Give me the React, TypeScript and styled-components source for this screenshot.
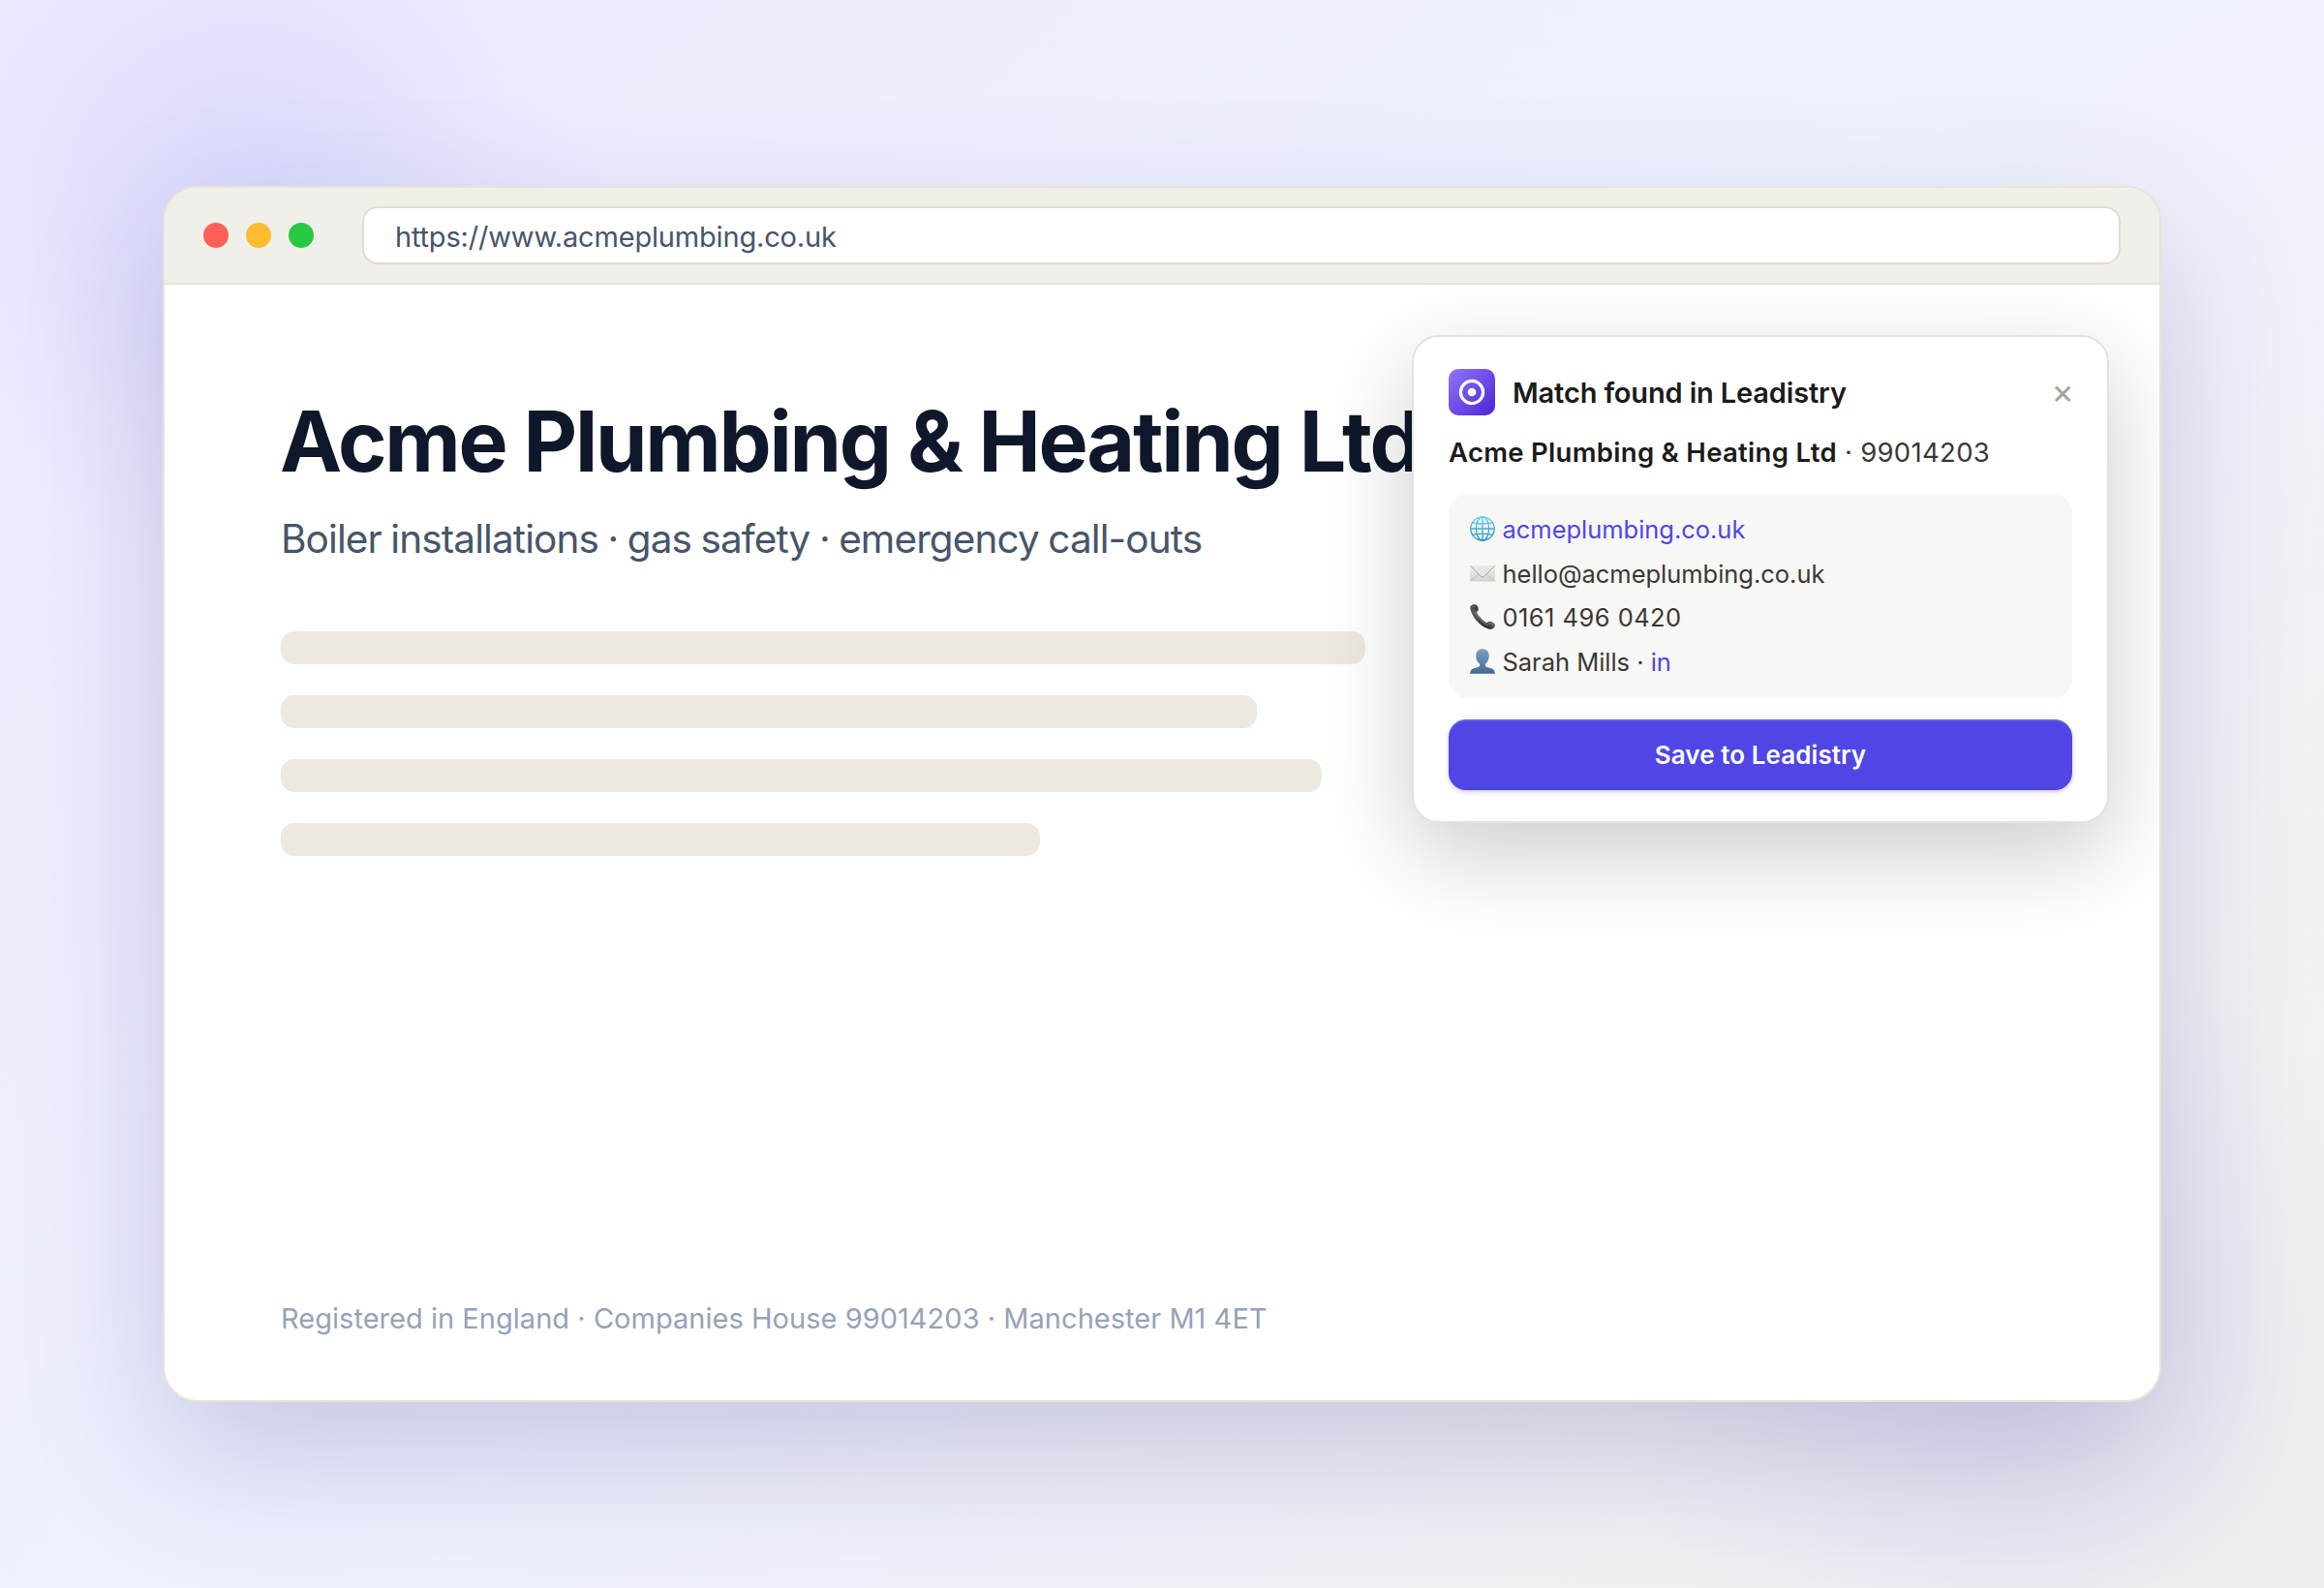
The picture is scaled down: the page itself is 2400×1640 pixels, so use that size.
import React from "react";
import styled, { createGlobalStyle } from "styled-components";

const GlobalStyle = createGlobalStyle`
  *, *::before, *::after { box-sizing: border-box; }
  body {
    margin: 0;
    font-family: Inter, "Liberation Sans", sans-serif;
    -webkit-font-smoothing: antialiased;
  }
`;

const Stage = styled.main`
  display: flex;
  align-items: center;
  justify-content: center;
  width: 2400px;
  height: 1640px;
  overflow: hidden;
  background:
    radial-gradient(circle at 260px 220px, rgba(129, 140, 248, 0.18) 0, rgba(129, 140, 248, 0.12) 130px, rgba(129, 140, 248, 0.04) 260px, transparent 370px),
    radial-gradient(circle at 2090px 1400px, rgba(139, 92, 246, 0.11) 0, rgba(139, 92, 246, 0.08) 150px, rgba(139, 92, 246, 0.035) 300px, transparent 430px),
    linear-gradient(135deg, #ede9fe 0%, #eef2ff 48%, #f3f1ee 100%);
`;

const BrowserWindow = styled.section`
  display: flex;
  flex-direction: column;
  width: 2064px;
  height: 1256px;
  overflow: hidden;
  border: 2px solid #e7e3d8;
  border-radius: 36px;
  background: #ffffff;
  box-shadow: 0 56px 150px rgba(38, 30, 120, 0.2);
`;

const TitleBar = styled.header`
  display: flex;
  align-items: center;
  gap: 50px;
  height: 100px;
  flex: none;
  padding: 0 40px;
  border-bottom: 2px solid #e7e3d8;
  background: #f0efea;
`;

const Lights = styled.div`
  display: flex;
  gap: 18px;
`;

const Light = styled.span<{ $color: string }>`
  width: 26px;
  height: 26px;
  border-radius: 50%;
  background: ${(p) => p.$color};
`;

const AddressBar = styled.div`
  flex: 1;
  height: 60px;
  padding: 1px 32px 0;
  border: 2px solid #e0ddd0;
  border-radius: 16px;
  background: #ffffff;
  color: #475569;
  font-size: 29px;
  line-height: 57px;
  letter-spacing: -0.18px;
`;

const Page = styled.div`
  position: relative;
  display: flex;
  flex: 1;
  flex-direction: column;
  padding: 114px 120px 66px;
`;

const Heading = styled.h1`
  margin: 0 0 0 -1px;
  color: #0f172a;
  font-size: 86px;
  font-weight: 700;
  line-height: 96px;
  letter-spacing: -2.27px;
  white-space: nowrap;
`;

const Tagline = styled.p`
  margin: 27px 0 0;
  color: #475569;
  font-size: 40.5px;
  line-height: 52px;
  letter-spacing: -0.9px;
  word-spacing: -1px;
`;

const Skeleton = styled.div`
  display: flex;
  flex-direction: column;
  gap: 32px;
  width: 1120px;
  margin-top: 69px;
`;

const SkeletonLine = styled.div<{ $width: number }>`
  width: ${(p) => p.$width}%;
  height: 34px;
  border-radius: 14px;
  background: #ede9de;
`;

const Registration = styled.p`
  margin: auto 0 0;
  color: #94a3b8;
  font-size: 29px;
  line-height: 36px;
  letter-spacing: 0.03px;
`;

const Popup = styled.aside`
  position: absolute;
  top: 52px;
  right: 52px;
  width: 720px;
  height: 504px;
  padding: 33px 36px 0;
  border: 2px solid #e3e3dd;
  border-radius: 28px;
  background: #ffffff;
  box-shadow: 0 32px 96px rgba(0, 0, 0, 0.2);
`;

const PopupHead = styled.div`
  display: flex;
  align-items: center;
  height: 48px;
`;

const Logo = styled.svg`
  width: 48px;
  height: 48px;
  margin-right: 18px;
`;

const PopupTitle = styled.h2`
  margin: 1px 0 0;
  flex: 1;
  color: #1c1b1a;
  font-size: 29px;
  font-weight: 600;
  line-height: 36px;
  letter-spacing: -0.15px;
`;

const CloseButton = styled.button`
  margin: -2px -2px 0 0;
  padding: 0;
  border: 0;
  background: none;
  color: #a8a29a;
  font: 400 36px/48px Inter, sans-serif;
`;

const Company = styled.p`
  margin: 17px 0 0;
  color: #3b3833;
  font-size: 27.5px;
  line-height: 42px;
  letter-spacing: 0.3px;
`;

const CompanyName = styled.strong`
  color: #1c1b1a;
  font-weight: 600;
`;

const Contacts = styled.ul`
  margin: 22px 0 0;
  padding: 14px 22px 15px;
  border-radius: 20px;
  background: #f7f7f5;
  list-style: none;
`;

const Contact = styled.li<{ $tracking?: number }>`
  display: flex;
  align-items: center;
  gap: 7.5px;
  height: 45.5px;
  color: #3b3833;
  font-size: 25.5px;
  line-height: 45.5px;
  letter-spacing: ${(p) => p.$tracking ?? -0.03}px;
`;

const Glyph = styled.svg`
  flex: none;
  width: 26px;
  height: 26px;
  margin-top: -1.5px;
`;

const Link = styled.a`
  color: #4f46e5;
  text-decoration: none;
`;

const SaveButton = styled.button`
  display: block;
  width: 100%;
  height: 73px;
  margin-top: 22px;
  padding: 0;
  border: 0;
  border-radius: 18px;
  background: #4f46e5;
  box-shadow: inset 0 2px 0 rgba(255, 255, 255, 0.14), 0 2px 5px rgba(79, 70, 229, 0.28);
  color: #ffffff;
  font: 600 26px/73px Inter, sans-serif;
  letter-spacing: 0.07px;
`;

const LogoMark = () => (
  <Logo viewBox="0 0 48 48" aria-hidden="true">
    <defs>
      <linearGradient id="logo" x1="0" y1="0" x2="1" y2="1">
        <stop offset="0" stopColor="#9275fd" />
        <stop offset="1" stopColor="#4c25d3" />
      </linearGradient>
    </defs>
    <rect width="48" height="48" rx="10" fill="url(#logo)" />
    <circle cx="24" cy="24" r="11.6" fill="none" stroke="#fff" strokeWidth="3.2" />
    <circle cx="24" cy="24" r="4.3" fill="#fff" />
  </Logo>
);

const GlobeGlyph = () => (
  <Glyph viewBox="0 0 26 26" aria-hidden="true">
    <defs>
      <linearGradient id="globe" x1="0" y1="0" x2="0" y2="1">
        <stop offset="0" stopColor="#6cc9e8" />
        <stop offset="1" stopColor="#2c8fb4" />
      </linearGradient>
    </defs>
    <circle cx="13" cy="13" r="12.5" fill="#e3f6fc" />
    <g fill="none" stroke="url(#globe)" strokeWidth="1.3">
      <circle cx="13" cy="13" r="12.2" />
      <ellipse cx="13" cy="13" rx="6.6" ry="12.2" />
      <path d="M13 .8 13.01 25.2M.8 13 25.2 13.01M2.8 6.7Q13 9.2 23.2 6.7M2.8 19.3Q13 16.8 23.2 19.3" />
    </g>
  </Glyph>
);

const EnvelopeGlyph = () => (
  <Glyph viewBox="0 0 26 26" aria-hidden="true">
    <defs>
      <linearGradient id="mail" x1="0" y1="0" x2="0" y2="1">
        <stop offset="0" stopColor="#f0f0f0" />
        <stop offset="1" stopColor="#d2d2d2" />
      </linearGradient>
    </defs>
    <rect x="0.2" y="5" width="25.6" height="16.6" rx="0.8" fill="url(#mail)" />
    <path d="M.6 21.2 9.8 13.4M25.4 21.2 16.2 13.4" stroke="#bcbcbc" strokeWidth="0.8" fill="none" />
    <path d="M.5 5.5 11.2 16.2Q13 17.8 14.8 16.2L25.5 5.5" stroke="#a9a9a9" strokeWidth="1" fill="#e6e6e6" />
  </Glyph>
);

const PhoneGlyph = () => (
  <Glyph viewBox="0 0 26 26" aria-hidden="true">
    <defs>
      <linearGradient id="phone" x1="0.6" y1="0.2" x2="0.3" y2="0.8">
        <stop offset="0" stopColor="#2b2f31" />
        <stop offset="0.5" stopColor="#5e6466" />
        <stop offset="1" stopColor="#26292b" />
      </linearGradient>
    </defs>
    <path
      d="M.3 3.6C.2 1.7 2.2.2 4.4.2 6.3.2 7.9 1.5 8.5 3.6 9 5.5 8.7 7 7.3 7.7 6.9 8 6.9 8.5 7.2 9.1 9.3 12.8 12.7 16.3 16.5 18.8 17.1 19.2 17.6 19.1 18 18.7 19 17.5 20.8 17.5 22.6 18.2 24.7 19 26 20.6 25.8 22.3 25.6 24.4 23.6 25.9 21.3 25.9 17.8 25.8 12.4 22.8 8.3 18.6 3.8 14 .6 8.1.3 3.6Z"
      fill="url(#phone)"
    />
    <path d="M4.8 7.5C7.5 13.2 12.3 18.3 18.3 21.6" stroke="#858c8e" strokeWidth="1" fill="none" opacity="0.7" />
    <path d="M2 3.2Q4 1.3 6.3 2.6M19.4 20Q22.3 19.5 24.3 21.8" stroke="#7c8284" strokeWidth="0.9" fill="none" />
  </Glyph>
);

const PersonGlyph = () => (
  <Glyph viewBox="0 0 26 26" aria-hidden="true">
    <defs>
      <linearGradient id="person" gradientUnits="userSpaceOnUse" x1="13" y1="0" x2="13" y2="26">
        <stop offset="0" stopColor="#79a3c6" />
        <stop offset="1" stopColor="#42698f" />
      </linearGradient>
    </defs>
    <path
      d="M13 .3C16.9.3 19.8 2.9 19.8 7.2 19.8 10.3 18.6 13.6 16.3 15.3 15.9 15.7 15.8 16.2 15.8 17 15.9 18.4 17 19 19.2 19.5 23.2 20.4 25.8 21.5 25.9 25.8L.1 25.8C.2 21.5 2.8 20.4 6.8 19.5 9 19 10.1 18.4 10.2 17 10.2 16.2 10.1 15.7 9.7 15.3 7.4 13.6 6.2 10.3 6.2 7.2 6.2 2.9 9.1.3 13 .3Z"
      fill="url(#person)"
    />
  </Glyph>
);

const skeletonWidths = [100, 90, 96, 70];

export default function App() {
  return (
    <>
      <GlobalStyle />
      <Stage>
        <BrowserWindow>
          <TitleBar>
            <Lights>
              <Light $color="#ff5f57" />
              <Light $color="#febc2e" />
              <Light $color="#28c840" />
            </Lights>
            <AddressBar>https://www.acmeplumbing.co.uk</AddressBar>
          </TitleBar>
          <Page>
            <Heading>Acme Plumbing &amp; Heating Ltd</Heading>
            <Tagline>Boiler installations · gas safety · emergency call-outs</Tagline>
            <Skeleton>
              {skeletonWidths.map((width) => (
                <SkeletonLine key={width} $width={width} />
              ))}
            </Skeleton>
            <Registration>
              Registered in England · Companies House 99014203 · Manchester M1 4ET
            </Registration>
            <Popup>
              <PopupHead>
                <LogoMark />
                <PopupTitle>Match found in Leadistry</PopupTitle>
                <CloseButton aria-label="Close">×</CloseButton>
              </PopupHead>
              <Company>
                <CompanyName>Acme Plumbing &amp; Heating Ltd</CompanyName> · 99014203
              </Company>
              <Contacts>
                <Contact>
                  <GlobeGlyph />
                  <Link>acmeplumbing.co.uk</Link>
                </Contact>
                <Contact>
                  <EnvelopeGlyph />
                  <span>hello@acmeplumbing.co.uk</span>
                </Contact>
                <Contact $tracking={0.45}>
                  <PhoneGlyph />
                  <span>0161 496 0420</span>
                </Contact>
                <Contact>
                  <PersonGlyph />
                  <span>
                    Sarah Mills · <Link>in</Link>
                  </span>
                </Contact>
              </Contacts>
              <SaveButton>Save to Leadistry</SaveButton>
            </Popup>
          </Page>
        </BrowserWindow>
      </Stage>
    </>
  );
}
